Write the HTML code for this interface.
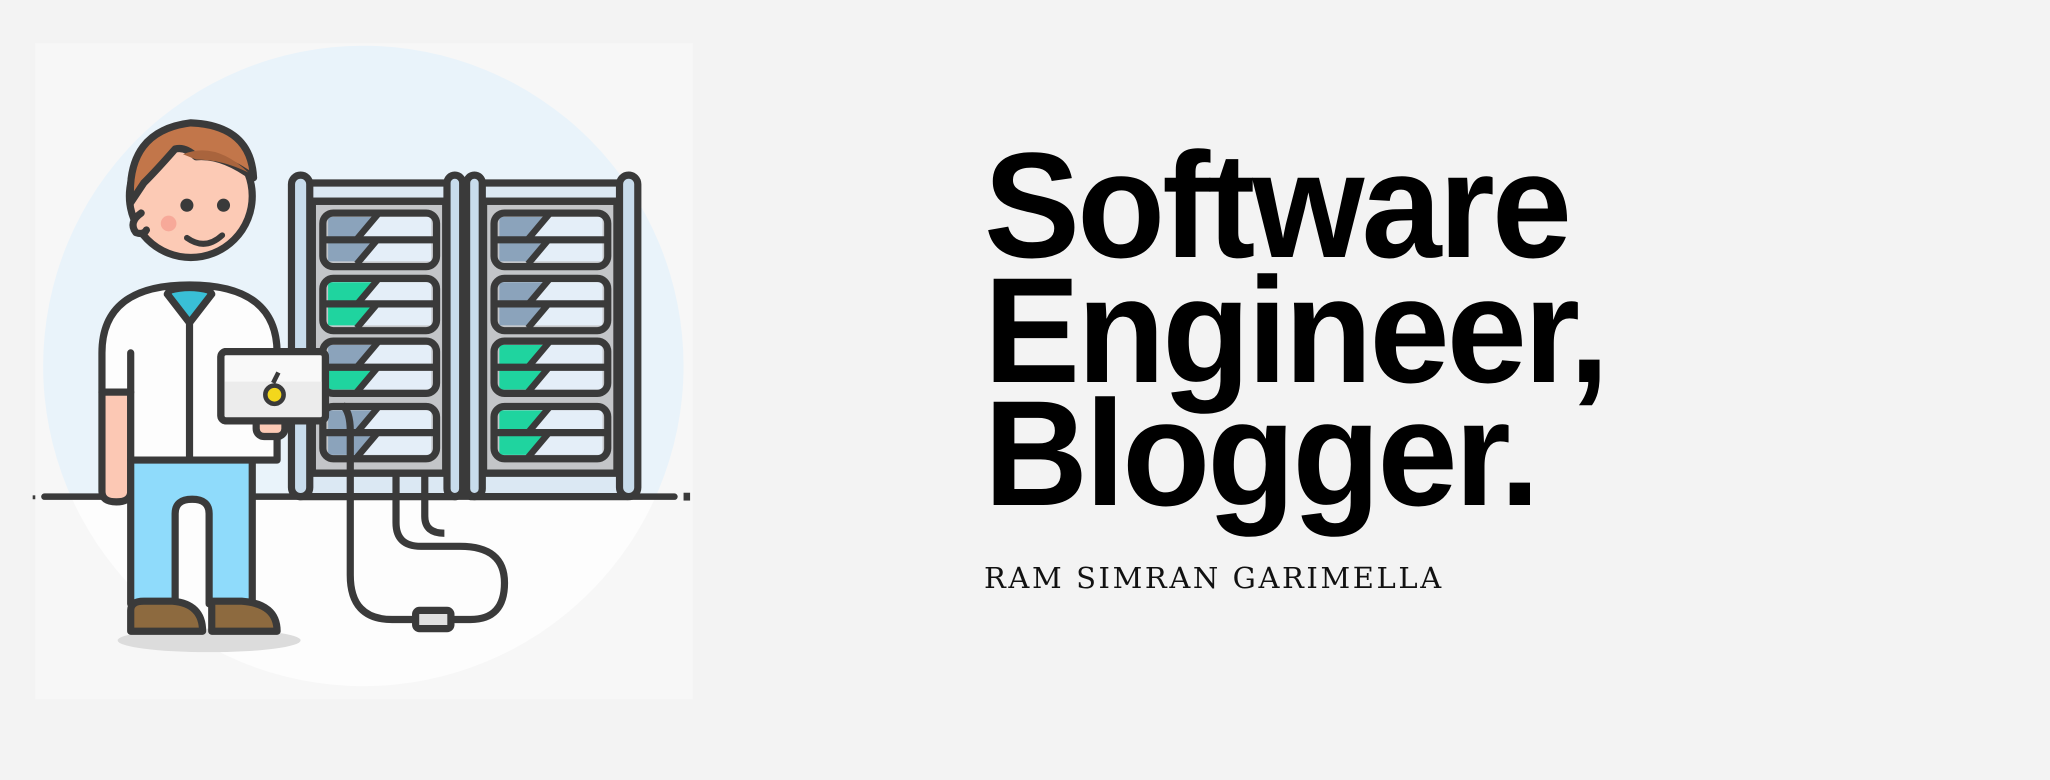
<!DOCTYPE html>
<html><head><meta charset="utf-8"><style>
html,body{margin:0;padding:0;background:#f3f3f3;width:2050px;height:780px;overflow:hidden;position:relative}
svg{position:absolute;left:0;top:0}
.h{position:absolute;left:984px;font-family:"Liberation Sans",sans-serif;font-weight:bold;font-size:150px;line-height:150px;color:#000;letter-spacing:-3px;transform-origin:0 0;transform:scaleX(0.96);white-space:nowrap}
.n{position:absolute;left:984px;top:561px;font-family:"DejaVu Serif","Liberation Serif",serif;font-size:29px;letter-spacing:2.6px;color:#111;white-space:nowrap}
</style></head><body>
<svg width="2050" height="780" viewBox="0 0 1568.5 596.8">
<defs>
<clipPath id="cc"><circle cx="278" cy="280" r="245"/></clipPath>
<g id="rowB"><rect x="0" y="0" width="79" height="15" fill="#e4eef8"/><polygon points="0,0 36,0 24,15 0,15" fill="#8ba3bb"/><line x1="22" y1="17" x2="38" y2="-2" stroke="#3a3a3a" stroke-width="5"/></g>
<g id="rowG"><rect x="0" y="0" width="79" height="15" fill="#e4eef8"/><polygon points="0,0 36,0 24,15 0,15" fill="#1fd49f"/><line x1="22" y1="17" x2="38" y2="-2" stroke="#3a3a3a" stroke-width="5"/></g>
</defs>
<rect x="27" y="33" width="503" height="502" fill="#f7f7f7"/>
<g clip-path="url(#cc)">
<rect x="0" y="0" width="600" height="380" fill="#e9f3fa"/>
<rect x="0" y="380" width="600" height="300" fill="#fdfdfd"/>
</g>
<g stroke="#3a3a3a" stroke-width="5.5" stroke-linejoin="round" stroke-linecap="round">
<rect x="229" y="140" width="120" height="240" fill="#dbe8f3"/>
<rect x="239" y="154" width="102" height="208" fill="#c3c5c8"/>
<rect x="223" y="134" width="14" height="246" rx="7" fill="#c8dcec"/>
<rect x="342" y="134" width="12" height="246" rx="6" fill="#c8dcec"/>
<rect x="360" y="140" width="120" height="240" fill="#dbe8f3"/>
<rect x="370" y="154" width="102" height="208" fill="#c3c5c8"/>
<rect x="357" y="134" width="12" height="246" rx="6" fill="#c8dcec"/>
<rect x="474" y="134" width="14" height="246" rx="7" fill="#c8dcec"/>
</g>
<g stroke="none">
<use href="#rowB" x="251" y="166"/><use href="#rowB" x="251" y="185"/>
<use href="#rowG" x="251" y="216"/><use href="#rowG" x="251" y="234"/>
<use href="#rowB" x="251" y="264"/><use href="#rowG" x="251" y="283"/>
<use href="#rowB" x="251" y="314"/><use href="#rowB" x="251" y="333"/>
<use href="#rowB" x="382" y="166"/><use href="#rowB" x="382" y="185"/>
<use href="#rowB" x="382" y="216"/><use href="#rowB" x="382" y="234"/>
<use href="#rowG" x="382" y="264"/><use href="#rowG" x="382" y="283"/>
<use href="#rowG" x="382" y="314"/><use href="#rowG" x="382" y="333"/>
</g>
<g fill="none" stroke="#3a3a3a" stroke-width="5.5">
<rect x="247" y="163" width="87" height="41" rx="8"/><line x1="249" y1="183.5" x2="332" y2="183.5"/>
<rect x="247" y="213" width="87" height="40" rx="8"/><line x1="249" y1="232.5" x2="332" y2="232.5"/>
<rect x="247" y="261" width="87" height="40" rx="8"/><line x1="249" y1="281" x2="332" y2="281"/>
<rect x="247" y="311" width="87" height="40" rx="8"/><line x1="249" y1="331" x2="332" y2="331"/>
<rect x="378" y="163" width="87" height="41" rx="8"/><line x1="380" y1="183.5" x2="463" y2="183.5"/>
<rect x="378" y="213" width="87" height="40" rx="8"/><line x1="380" y1="232.5" x2="463" y2="232.5"/>
<rect x="378" y="261" width="87" height="40" rx="8"/><line x1="380" y1="281" x2="463" y2="281"/>
<rect x="378" y="311" width="87" height="40" rx="8"/><line x1="380" y1="331" x2="463" y2="331"/>
<line x1="237" y1="154" x2="342" y2="154"/><line x1="237" y1="362" x2="342" y2="362"/>
<line x1="369" y1="154" x2="474" y2="154"/><line x1="369" y1="362" x2="474" y2="362"/>
<path d="M303 362 V400 Q303 418 322 418 H352 Q386 418 386 446 Q386 474 360 474 H345"/>
<path d="M325 362 V395 Q325 408 340 408"/>
<path d="M262 310 Q268 315 268 330 V440 Q268 474 300 474 H318"/>
<rect x="318" y="467" width="27" height="14" rx="3" fill="#e0e0e0"/>
</g>
<line x1="34" y1="380" x2="516" y2="380" stroke="#3a3a3a" stroke-width="5" stroke-linecap="round"/>
<rect x="523" y="377" width="5" height="6" fill="#3a3a3a"/><rect x="25" y="379" width="2" height="3" fill="#3a3a3a"/>
<ellipse cx="160" cy="490" rx="70" ry="9" fill="#dcdcdc"/>
<g stroke="#3a3a3a" stroke-width="5.5" stroke-linejoin="round" stroke-linecap="round">
<path d="M78 300 V376 Q78 384 89 384 Q100 384 100 376 V300 Z" fill="#fcc8b4"/>
<path d="M78 300 V270 Q78 218 145 218 Q212 218 212 270 V352 H100 V300 Z" fill="#fdfdfd"/>
<line x1="145" y1="240" x2="145" y2="350"/>
<path d="M128 225 L145 247 L162 225 L160 222 Q145 218 130 222 Z" fill="#39bfd6"/>
<line x1="100" y1="300" x2="100" y2="270"/>
<path d="M100 352 H193 V462 H160 V393 Q160 382 147 382 Q134 382 134 393 V462 H100 Z" fill="#8fdbfb"/>
<path d="M100 483 V467 Q100 460 110 460 H132 Q155 462 155 483 Z" fill="#8d6a3f"/>
<path d="M162 483 V460 H185 Q212 462 212 483 Z" fill="#8d6a3f"/>
<circle cx="146" cy="150" r="47" fill="#fccab5"/>
<path d="M100 155 Q96 100 146 94 Q192 96 194 136 Q170 118 150 120 Q142 112 134 114 Q120 130 110 140 Z" fill="#c2764a"/>
<path d="M108 163 Q98 170 104 178 Q110 180 112 176" fill="#fccab5"/>
<rect x="196" y="316" width="22" height="18" rx="6" fill="#fccab5"/>
<rect x="169" y="269" width="80" height="53" rx="4" fill="#f9f9f9"/>
</g>
<path d="M140 118 Q165 108 190 132 Q170 122 150 122 Z" fill="#a9643d"/>
<rect x="172" y="292" width="75" height="28" fill="#ececec"/>
<rect x="169" y="269" width="80" height="53" rx="4" fill="none" stroke="#3a3a3a" stroke-width="5.5"/>
<circle cx="210" cy="302" r="7" fill="#f3d71c" stroke="#3a3a3a" stroke-width="3.5"/>
<path d="M209 293 L213 285" stroke="#3a3a3a" stroke-width="3.5"/>
<circle cx="143" cy="157" r="5" fill="#3a3a3a"/><circle cx="171" cy="157" r="5" fill="#3a3a3a"/>
<circle cx="129" cy="171" r="6" fill="#f7a999"/>
<path d="M143 182 Q157 192 170 180" fill="none" stroke="#3a3a3a" stroke-width="4.5" stroke-linecap="round"/>
</svg>
<div class="h" style="top:130px">Software</div>
<div class="h" style="top:255px">Engineer,</div>
<div class="h" style="top:378px">Blogger.</div>
<div class="n">RAM SIMRAN GARIMELLA</div>
</body></html>
